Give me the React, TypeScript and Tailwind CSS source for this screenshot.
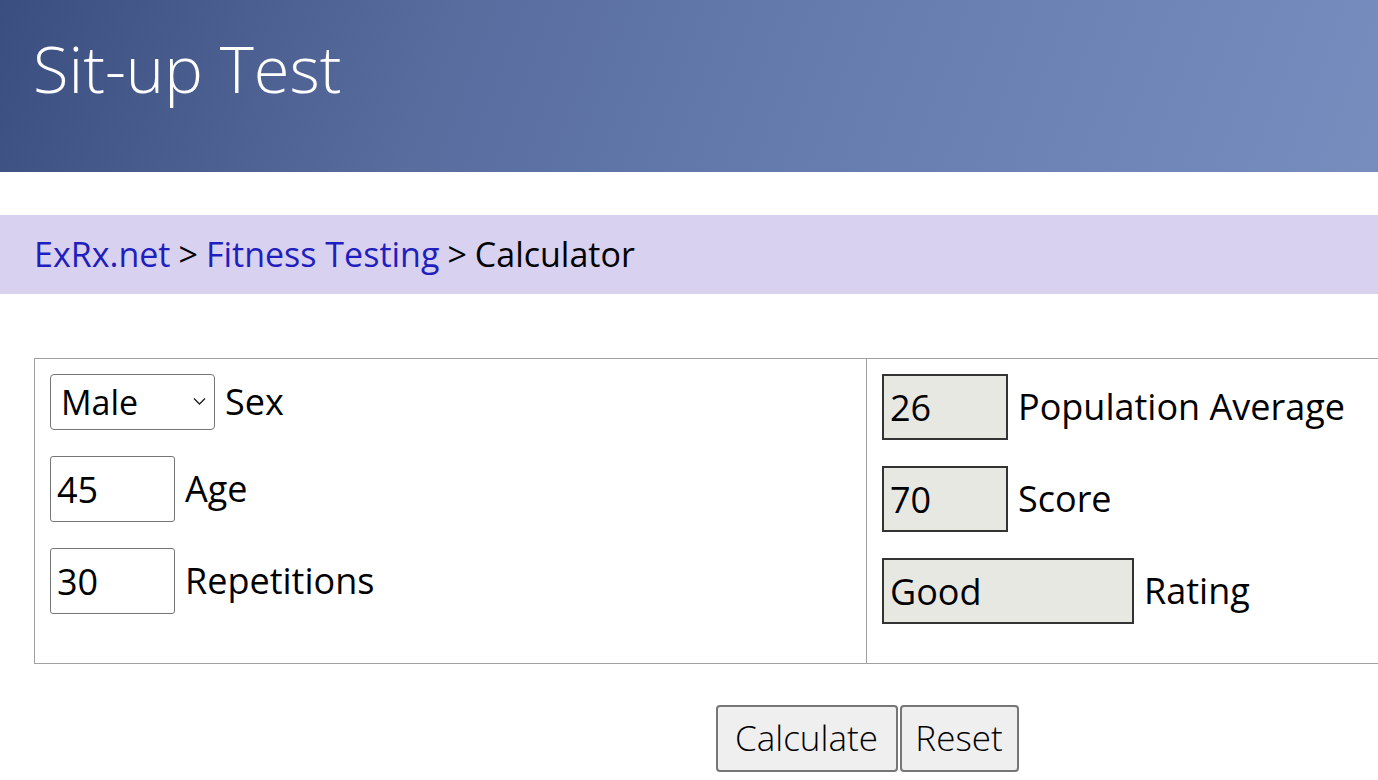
import { useState } from 'react';

function Field({ value, width, label }: { value: string; width: string; label: string }) {
  return (
    <div className="flex items-center gap-[10px]">
      <input
        value={value}
        onChange={() => {}}
        className={`${width} h-[66px] border border-[#767676] rounded-[3px] px-[6px] text-[36px] text-black bg-white outline-none`}
      />
      <span>{label}</span>
    </div>
  );
}

function Result({ value, width, label }: { value: string; width: string; label: string }) {
  return (
    <div className="flex items-center gap-[10px]">
      <input
        value={value}
        readOnly
        className={`${width} h-[66px] border-2 border-[#333333] px-[6px] text-[36px] text-black bg-[#e8e8e3] outline-none`}
      />
      <span>{label}</span>
    </div>
  );
}

function App() {
  const [sex, setSex] = useState('Male');

  return (
    <div className="w-[1378px] h-[780px] overflow-hidden bg-white text-black font-['Open_Sans',sans-serif]">
      <div className="h-[172px] bg-[linear-gradient(110deg,#3a4e7f_0%,#586c9e_32%,#677db0_62%,#778dbe_100%)] px-[33px] pt-[29px]">
        <h1 className="text-[65px] font-light text-white leading-[1.2]">Sit-up Test</h1>
      </div>

      <div className="mt-[43px] h-[79px] bg-[#d9d1f0] px-[34px] flex items-center text-[34px]">
        <a href="#" className="text-[#1f1fbf]">ExRx.net</a>
        <span className="mx-[8px]">&gt;</span>
        <a href="#" className="text-[#1f1fbf]">Fitness Testing</a>
        <span className="mx-[8px]">&gt;</span>
        <span>Calculator</span>
      </div>

      <div className="mt-[64px] ml-[34px] w-[1666px] h-[306px] flex border border-[#a0a0a0] text-[36px]">
        <div className="w-[833px] border-r border-[#a0a0a0] pl-[15px] pt-[15px] flex flex-col gap-[26px]">
          <div className="flex items-center gap-[10px]">
            <div className="relative">
              <select
                value={sex}
                onChange={(e) => setSex(e.target.value)}
                className="appearance-none w-[165px] h-[56px] border border-[#767676] rounded-[4px] pl-[10px] text-[34px] bg-white outline-none"
              >
                <option>Male</option>
                <option>Female</option>
              </select>
              <svg
                className="absolute right-[9px] top-[23px] pointer-events-none"
                width="13"
                height="9"
                viewBox="0 0 13 9"
                fill="none"
                stroke="#222"
                strokeWidth="1.4"
              >
                <path d="M1 1.5l5.5 5.5 5.5-5.5" />
              </svg>
            </div>
            <span>Sex</span>
          </div>
          <Field value="45" width="w-[125px]" label="Age" />
          <Field value="30" width="w-[125px]" label="Repetitions" />
        </div>
        <div className="w-[833px] pl-[15px] pt-[15px] flex flex-col gap-[26px]">
          <Result value="26" width="w-[126px]" label="Population Average" />
          <Result value="70" width="w-[126px]" label="Score" />
          <Result value="Good" width="w-[252px]" label="Rating" />
        </div>
      </div>

      <div className="ml-[34px] w-[1666px] mt-[41px] flex justify-center gap-[2px]">
        <button className="w-[182px] h-[67px] bg-[#efefef] border-2 border-[#767676] rounded-[4px] text-[35px] font-light">
          Calculate
        </button>
        <button className="w-[119px] h-[67px] bg-[#efefef] border-2 border-[#767676] rounded-[4px] text-[35px] font-light">
          Reset
        </button>
      </div>
    </div>
  );
}

export default App;
